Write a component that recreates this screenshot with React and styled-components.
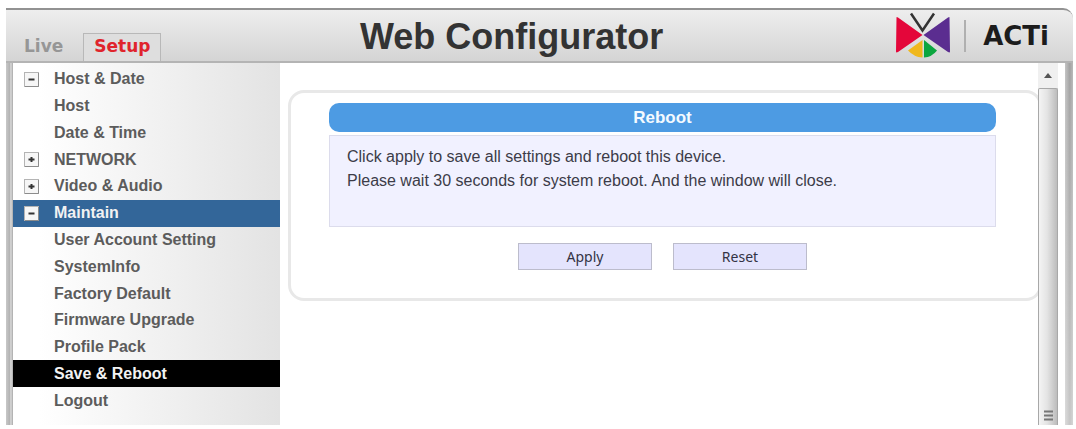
import React, { useState } from 'react';
import styled, { createGlobalStyle } from 'styled-components';


const MENU = [
  { label: 'Host & Date', toggle: 'minus' },
  { label: 'Host' },
  { label: 'Date & Time' },
  { label: 'NETWORK', toggle: 'plus' },
  { label: 'Video & Audio', toggle: 'plus' },
  { label: 'Maintain', toggle: 'minus', section: true },
  { label: 'User Account Setting' },
  { label: 'SystemInfo' },
  { label: 'Factory Default' },
  { label: 'Firmware Upgrade' },
  { label: 'Profile Pack' },
  { label: 'Save & Reboot' },
  { label: 'Logout' }
]

function Toggle({ type }) {
  return (
    <ToggleIcon viewBox="0 0 15 15" aria-hidden="true">
      <rect x="0.5" y="0.5" width="14" height="14" fill="#f6f6f6" stroke="#b4b4b4" />
      <path d="M14.5 1v13.500H1" fill="none" stroke="#8c8c8c" />
      <path d="M4.500 7.500h6" stroke="#333" strokeWidth="2" />
      {type === 'plus' && <path d="M7.500 5v5" stroke="#333" strokeWidth="2" />}
    </ToggleIcon>
  )
}

function Butterfly() {
  return (
    <Logo viewBox="0 0 58 48" aria-hidden="true">
      <path d="M2.500 5.500Q2.500 4.500 4 5.500L28.500 23L4 40Q2 41 2 39.500Z" fill="#e4063a" />
      <path d="M55.500 5.500Q55.500 4.500 54 5.500L29.500 23L54 40Q56 41 56 39.500Z" fill="#5b2d90" />
      <path d="M28.500 28V45.500Q20 45 14 38.500Z" fill="#f0b81c" />
      <path d="M30 28V45.500Q38 45 43 38.500Z" fill="#0ca63f" />
      <path d="M17 1.500L28.500 18.500L40 1.500" fill="none" stroke="#333" strokeWidth="2.500" />
    </Logo>
  )
}

function App() {
  const [active, setActive] = useState('Save & Reboot');

  return (
    <Window>
      <GlobalStyle />
      <Header>
        <Tabs>
          <Tab href="#live">Live</Tab>
          <Tab href="#setup" $active>Setup</Tab>
        </Tabs>
        <Title>Web Configurator</Title>
        <Brand>
          <Butterfly />
          <Divider />
          <BrandName>ACTi</BrandName>
        </Brand>
      </Header>
      <Body>
        <Edge />
        <Sidebar>
          <Menu>
            {MENU.map(item => (
              <MenuItem key={item.label} $section={item.section} $active={item.label === active}>
                {item.toggle && <Toggle type={item.toggle} />}
                <MenuLink href="#menu" onClick={() => setActive(item.label)}>{item.label}</MenuLink>
              </MenuItem>
            ))}
          </Menu>
        </Sidebar>
        <Content>
          <Card>
            <Banner>Reboot</Banner>
            <Message>
              Click apply to save all settings and reboot this device.<br />
              Please wait 30 seconds for system reboot. And the window will close.
            </Message>
            <Buttons>
              <Button type="button">Apply</Button>
              <Button type="button">Reset</Button>
            </Buttons>
          </Card>
        </Content>
        <Scrollbar>
          <Arrow viewBox="0 0 20 25" aria-hidden="true">
            <path d="M6 15L10 10L14 15Z" fill="#555" />
          </Arrow>
          <Thumb>
            <Grip viewBox="0 0 9 12" aria-hidden="true">
              <path d="M0 1.500h9M0 5.500h9M0 9.500h9" stroke="#777" strokeWidth="2" />
            </Grip>
          </Thumb>
        </Scrollbar>
        <Edge $right />
      </Body>
    </Window>
  );
}

export default App;

const GlobalStyle = createGlobalStyle`
  * {
    box-sizing: border-box;
  }

  body {
    margin: 0;
    background: #fff;
    font-family: "Liberation Sans", Arial, sans-serif;
  }
`

const Window = styled.div`
  margin: 8px 3px 4px 6px;
`

const Header = styled.header`
  display: flex;
  height: 55px;
  padding-right: 24px;
  border-top: 2px solid #929292;
  border-bottom: 2px solid #b4b4b4;
  border-top-right-radius: 10px;
  background: linear-gradient(#eeeeee, #d4d4d4);
`

const Tabs = styled.nav`
  display: flex;
  align-items: flex-end;
  width: 354px;
  padding-left: 7px;
`

const Tab = styled.a`
  height: 28px;
  padding: 0 10px;
  border: ${props => props.$active ? '1px solid #b8b8b8' : '1px solid transparent'};
  border-bottom: 0;
  margin-right: 9px;
  background: ${props => props.$active ? '#dedede' : 'transparent'};
  color: ${props => props.$active ? '#e0242c' : '#969696'};
  font: bold 17px/25px "DejaVu Sans", sans-serif;
  text-decoration: none;
`

const Title = styled.h1`
  flex: 1;
  margin: 0;
  color: #333;
  font-size: 36px;
  line-height: 54px;
  white-space: nowrap;
`

const Brand = styled.div`
  display: flex;
  align-items: center;
`

const Logo = styled.svg`
  width: 58px;
  height: 48px;
`

const Divider = styled.span`
  width: 2px;
  height: 32px;
  margin: 0 17px 0 12px;
  background: #b0b0b0;
`

const BrandName = styled.span`
  color: #1c1c1c;
  font: bold 26px/48px "DejaVu Sans", sans-serif;
`

const Body = styled.div`
  display: flex;
`

const Edge = styled.div`
  width: ${props => props.$right ? '8px' : '7px'};
  margin-left: ${props => props.$right ? '7px' : '0'};
  background: ${props => props.$right
    ? 'linear-gradient(rgba(255, 255, 255, 0), rgba(255, 255, 255, 0.4)), linear-gradient(90deg, #c4c4c4, #a2a2a2 60%, #bababa)'
    : 'linear-gradient(90deg, #c8c8c8, #b4b4b4 50%, #dadada 70%, #a8a8a8)'};
`

const Sidebar = styled.aside`
  width: 267px;
  padding: 3px 0 11px;
  background: linear-gradient(90deg, #fff 10%, #e3e3e3);
`

const Menu = styled.ul`
  display: grid;
  grid-auto-rows: 1fr;
  min-height: 348px;
  margin: 0;
  padding: 0;
  list-style: none;
`

const MenuItem = styled.li`
  display: grid;
  grid-template-columns: 30px 1fr;
  align-items: center;
  padding-left: 11px;
  background: ${props => props.$active ? '#000' : props.$section ? '#336699' : 'transparent'};
  color: ${props => props.$active || props.$section ? '#f2f2f2' : '#5c5c5c'};
`

const ToggleIcon = styled.svg`
  width: 15px;
  height: 15px;
`

const MenuLink = styled.a`
  grid-column: 2;
  color: inherit;
  font-size: 16px;
  font-weight: bold;
  line-height: 24px;
  text-decoration: none;
`

const Content = styled.main`
  flex: 1;
  overflow: hidden;
  padding: 27px 0 0 8px;
`

const Card = styled.section`
  margin-right: -4px;
  padding: 10px 43px 28px 38px;
  border: 3px solid #e8e8e8;
  border-radius: 16px;
`

const Banner = styled.h2`
  margin: 0 0 3px;
  border-radius: 10px;
  background: #4d9be3;
  color: #f4faff;
  font-size: 17px;
  line-height: 29px;
  text-align: center;
`

const Message = styled.p`
  min-height: 92px;
  margin: 0;
  padding: 9px 17px;
  border: 1px solid #dcdcec;
  background: #f1f1ff;
  color: #3c3c48;
  font-size: 16px;
  line-height: 24px;
`

const Buttons = styled.div`
  display: flex;
  justify-content: center;
  gap: 21px;
  padding-top: 16px;
`

const Button = styled.button`
  width: 134px;
  height: 27px;
  padding: 0;
  border: 1px solid #bcbccc;
  background: #e4e4fd;
  color: #333344;
  font: 14px/24px "Noto Sans", sans-serif;
`

const Scrollbar = styled.div`
  display: flex;
  flex-direction: column;
  width: 20px;
  background: #f0f0f0;
`

const Arrow = styled.svg`
  width: 20px;
  height: 25px;
`

const Thumb = styled.div`
  display: flex;
  flex: 1;
  align-items: flex-end;
  justify-content: center;
  padding-bottom: 3px;
  border: 1px solid #a8a8a8;
  border-bottom: 0;
  border-radius: 2px 2px 0 0;
  background: linear-gradient(90deg, #f4f4f4, #e4e4e4 45%, #bcbcbc);
`

const Grip = styled.svg`
  width: 9px;
  height: 12px;
`
